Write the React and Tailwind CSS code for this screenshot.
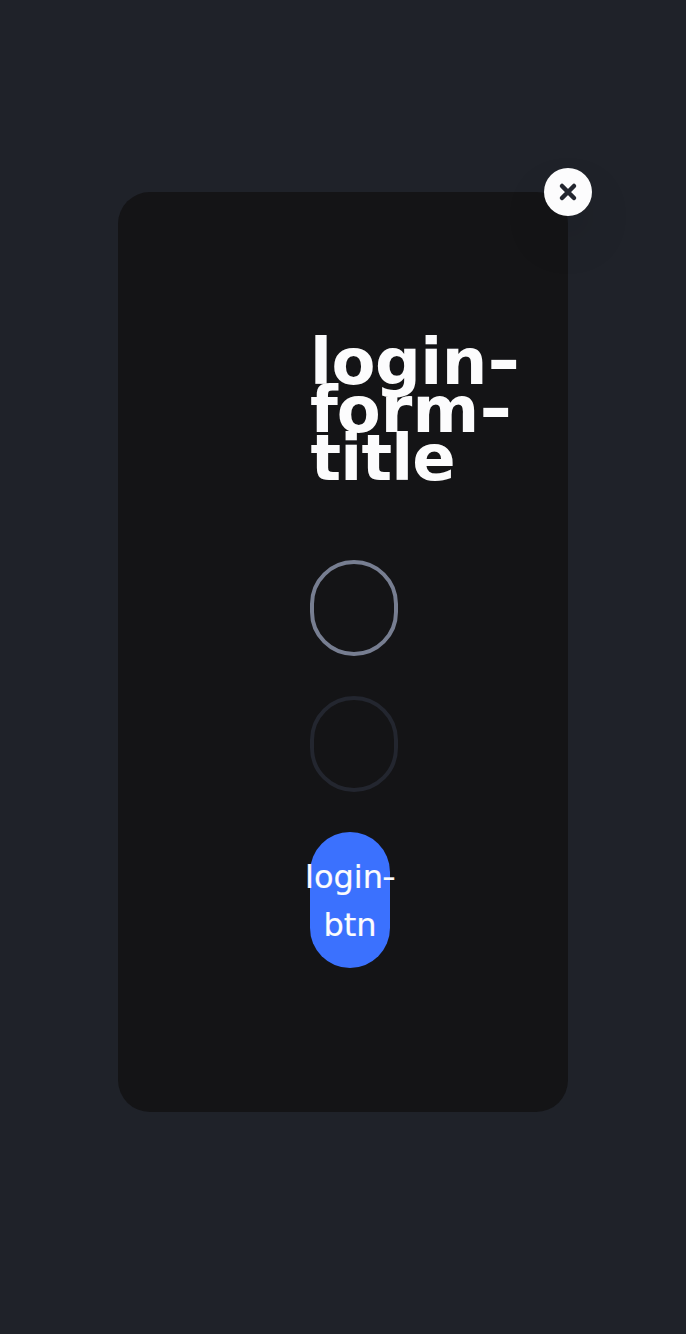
export default function App() {
  return (
    <div className="flex h-[1334px] w-full flex-col overflow-hidden bg-[#1f2229] pt-[192px] pl-[118px] font-['DejaVu_Sans',sans-serif] text-white">
      <div className="relative flex h-[920px] w-[450px] flex-col items-start rounded-[32px] bg-[#141416] pt-[146px] pl-[192px]">
        <button aria-label="Close" className="absolute -top-6 -right-6 flex size-12 items-center justify-center rounded-full bg-[#fcfcfd] shadow-[0_24px_48px_rgba(15,15,15,0.1)]">
          <svg className="size-12" viewBox="0 0 48 48" fill="none" stroke="#23262f" strokeWidth="4.5" strokeLinecap="round">
            <path d="M18 18 30 30M30 18 18 30" />
          </svg>
        </button>
        <h1 className="w-[210px] text-[64px] leading-[48px] font-bold whitespace-nowrap text-[#fcfcfd]">
          <span className="block tracking-[-0.5px]">login<span className="ml-[0.5px] inline-block origin-left -translate-y-px scale-x-[1.26]">-</span></span>
          <span className="block"><span className="tracking-[-1px]">f</span>orm<span className="ml-[0.3px] inline-block origin-left -translate-y-px scale-x-[1.26]">-</span></span>
          <span className="block pl-[0.5px] tracking-[-0.8px]">title</span>
        </h1>
        <input aria-label="Username" className="mt-[78px] h-24 w-[88px] rounded-[48px] border-4 border-[#777e91] outline-none" />
        <input aria-label="Password" className="mt-10 h-24 w-[88px] rounded-[48px] border-4 border-[#23262f] outline-none" />
        <button className="mt-10 flex h-[136px] w-20 flex-col items-center justify-center rounded-[48px] bg-[#3b71fe] pt-0.5 text-[32px] leading-[48px] text-[#fcfcfd] [-webkit-text-stroke:0.2px_#fcfcfd]">
          <span className="-ml-[1.5px] whitespace-nowrap">login<span className="-ml-px inline-block origin-left -translate-y-[0.5px] scale-x-[1.2]">-</span></span>
          <span>btn</span>
        </button>
      </div>
    </div>
  );
}
